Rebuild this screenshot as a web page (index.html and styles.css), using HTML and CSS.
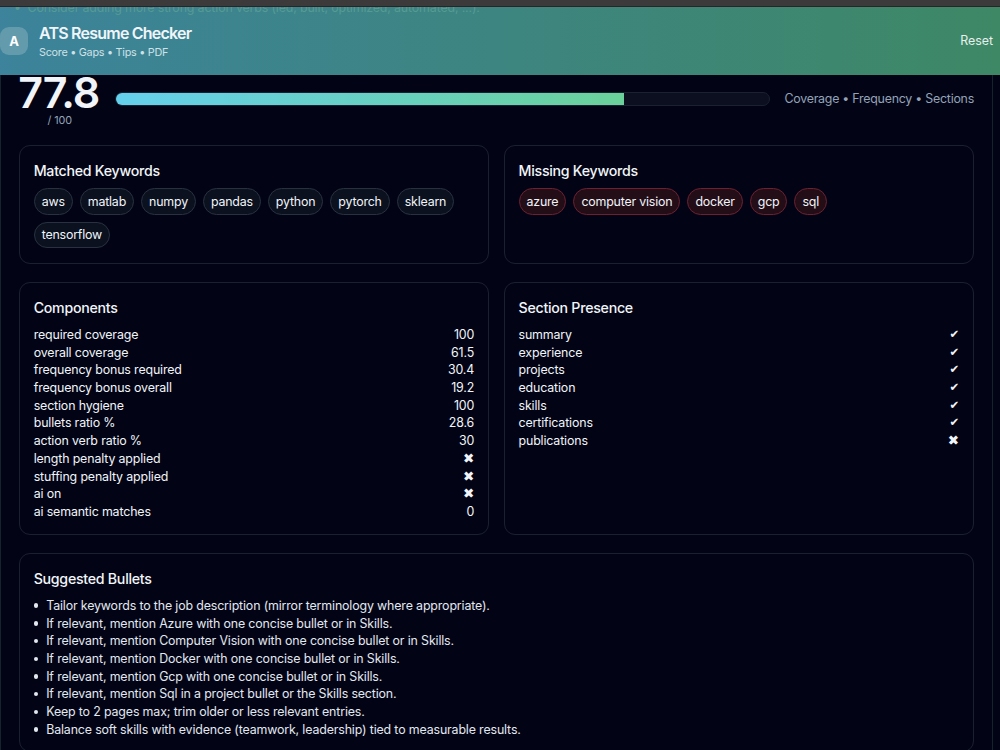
FILE: index.html
```
<!DOCTYPE html>
<html lang="en">

<head>
    <meta charset="UTF-8">
    <meta name="viewport" content="width=device-width, initial-scale=1.0">
    <title>ATS Resume Checker</title>
    <link rel="stylesheet" href="styles.css">
</head>

<body>
    <div class="window-edge"></div>
    <header class="topbar">
        <div class="ghost">•&nbsp; Consider adding more strong action verbs (led, built, optimized, automated, ...).</div>
        <div class="logo">A</div>
        <div class="brand">
            <h1>ATS Resume Checker</h1>
            <p>Score • Gaps • Tips • PDF</p>
        </div>
        <a class="reset">Reset</a>
    </header>

    <main class="panel">
        <section class="score-row">
            <div class="score">
                <div class="score-num">77.8</div>
                <div class="score-max">/ 100</div>
            </div>
            <div class="bar">
                <div class="bar-fill" style="width: 77.8%"></div>
            </div>
            <div class="legend">Coverage • Frequency • Sections</div>
        </section>

        <div class="grid">
            <section class="card">
                <h2>Matched Keywords</h2>
                <div class="chips">
                    <span class="chip">aws</span>
                    <span class="chip">matlab</span>
                    <span class="chip">numpy</span>
                    <span class="chip">pandas</span>
                    <span class="chip">python</span>
                    <span class="chip">pytorch</span>
                    <span class="chip">sklearn</span>
                    <span class="chip">tensorflow</span>
                </div>
            </section>
            <section class="card">
                <h2>Missing Keywords</h2>
                <div class="chips">
                    <span class="chip missing">azure</span>
                    <span class="chip missing">computer vision</span>
                    <span class="chip missing">docker</span>
                    <span class="chip missing">gcp</span>
                    <span class="chip missing">sql</span>
                </div>
            </section>

            <section class="card">
                <h2>Components</h2>
                <ul class="rows">
                    <li><span>required coverage</span><span>100</span></li>
                    <li><span>overall coverage</span><span>61.5</span></li>
                    <li><span>frequency bonus required</span><span>30.4</span></li>
                    <li><span>frequency bonus overall</span><span>19.2</span></li>
                    <li><span>section hygiene</span><span>100</span></li>
                    <li><span>bullets ratio %</span><span>28.6</span></li>
                    <li><span>action verb ratio %</span><span>30</span></li>
                    <li><span>length penalty applied</span><span class="mark">✖</span></li>
                    <li><span>stuffing penalty applied</span><span class="mark">✖</span></li>
                    <li><span>ai on</span><span class="mark">✖</span></li>
                    <li><span>ai semantic matches</span><span>0</span></li>
                </ul>
            </section>
            <section class="card">
                <h2>Section Presence</h2>
                <ul class="rows">
                    <li><span>summary</span><span class="mark check">✔</span></li>
                    <li><span>experience</span><span class="mark check">✔</span></li>
                    <li><span>projects</span><span class="mark check">✔</span></li>
                    <li><span>education</span><span class="mark check">✔</span></li>
                    <li><span>skills</span><span class="mark check">✔</span></li>
                    <li><span>certifications</span><span class="mark check">✔</span></li>
                    <li><span>publications</span><span class="mark">✖</span></li>
                </ul>
            </section>

            <section class="card wide">
                <h2>Suggested Bullets</h2>
                <ul class="bullets">
                    <li>Tailor keywords to the job description (mirror terminology where appropriate).</li>
                    <li>If relevant, mention Azure with one concise bullet or in Skills.</li>
                    <li>If relevant, mention Computer Vision with one concise bullet or in Skills.</li>
                    <li>If relevant, mention Docker with one concise bullet or in Skills.</li>
                    <li>If relevant, mention Gcp with one concise bullet or in Skills.</li>
                    <li>If relevant, mention Sql in a project bullet or the Skills section.</li>
                    <li>Keep to 2 pages max; trim older or less relevant entries.</li>
                    <li>Balance soft skills with evidence (teamwork, leadership) tied to measurable results.</li>
                </ul>
            </section>
        </div>
    </main>
</body>

</html>
```
FILE: styles.css
```
* {
    margin: 0;
    padding: 0;
    box-sizing: border-box;
}

body {
    height: 750px;
    overflow: hidden;
    background: #020415;
    color: #f1f5f9;
    font-family: Inter, "Liberation Sans", sans-serif;
    font-size: 12.4px;
    line-height: 17.72px;
    letter-spacing: -0.145px;
}

ul {
    list-style: none;
}

.window-edge {
    height: 7px;
    background: #3c3a3b;
    border-bottom: 1px solid #2b2426;
}

/* header */
.topbar {
    position: relative;
    display: flex;
    align-items: center;
    height: 68px;
    padding-right: 7px;
    overflow: hidden;
    background: linear-gradient(90deg, #3c839b 0%, #3d8580 50%, #3e8866 100%);
}

.ghost {
    position: absolute;
    top: -8px;
    left: 14px;
    color: #559b93;
    white-space: nowrap;
}

.logo {
    width: 28px;
    height: 28px;
    margin-top: -1px;
    border-radius: 9px;
    background: #649bac;
    color: #fff;
    font-size: 13px;
    font-weight: 700;
    line-height: 28px;
    text-align: center;
}

.brand {
    flex: 1;
    margin-left: 11px;
}

.brand h1 {
    font-size: 16px;
    font-weight: 600;
    line-height: 22px;
    letter-spacing: -0.78px;
}

.brand p {
    color: #cfe1e6;
    font-size: 10.8px;
    line-height: 17px;
    letter-spacing: -0.26px;
}

.reset {
    color: #e6f0ec;
    letter-spacing: 0;
}

/* result panel */
.panel {
    width: 993px;
    height: 675px;
    padding: 0 18px 0 17.7px;
    border: solid #17222f;
    border-width: 0 1px;
}

.score-row {
    display: flex;
    align-items: center;
    height: 70px;
    padding-bottom: 22px;
}

.score {
    width: 82px;
    text-align: center;
}

.score-num {
    margin-left: -2px;
    font-size: 43px;
    font-weight: 600;
    line-height: 43px;
    letter-spacing: -1px;
}

.score-max {
    color: #94a3b8;
    font-size: 10.8px;
    line-height: 14px;
}

.bar {
    flex: 1;
    height: 14px;
    margin: 0 14px 0 14.5px;
    overflow: hidden;
    border: 1px solid #1b2132;
    border-radius: 7px;
    background: #0b0f20;
}

.bar-fill {
    height: 100%;
    background: linear-gradient(90deg, #65d0ec, #6ad19a);
}

.legend {
    width: 189.6px;
    color: #94a3b8;
    letter-spacing: -0.24px;
    white-space: nowrap;
}

.grid {
    display: grid;
    grid-template-columns: 1fr 1fr;
    grid-template-rows: 118.6px 253px 199px;
    gap: 18px 14.4px;
}

.card {
    padding: 14px;
    border: 1px solid #1b2030;
    border-radius: 11px;
}

.card h2 {
    margin-bottom: 7px;
    font-size: 14.2px;
    font-weight: 500;
    line-height: 21.3px;
    letter-spacing: -0.27px;
}

.wide {
    grid-column: 1 / 3;
}

.chips {
    display: flex;
    flex-wrap: wrap;
    gap: 7px;
}

.chip {
    padding: 0.4px 7px 0;
    border: 1px solid #293141;
    border-radius: 14px;
    background: #0b111e;
    line-height: 24.2px;
    letter-spacing: -0.19px;
}

.missing {
    border-color: #6e2030;
    background: #230e18;
}

.rows,
.bullets {
    padding-top: 0.9px;
}

.rows li {
    display: flex;
    justify-content: space-between;
    height: 17.72px;
}

.mark {
    font-family: "DejaVu Sans", sans-serif;
    font-size: 13.5px;
}

.check {
    font-size: 11.5px;
}

.bullets li {
    display: flex;
    align-items: center;
    color: #e2e8f0;
}

.bullets li::before {
    content: "";
    width: 4.5px;
    height: 4.5px;
    margin-right: 8px;
    border-radius: 50%;
    background: #e2e8f0;
}
```
